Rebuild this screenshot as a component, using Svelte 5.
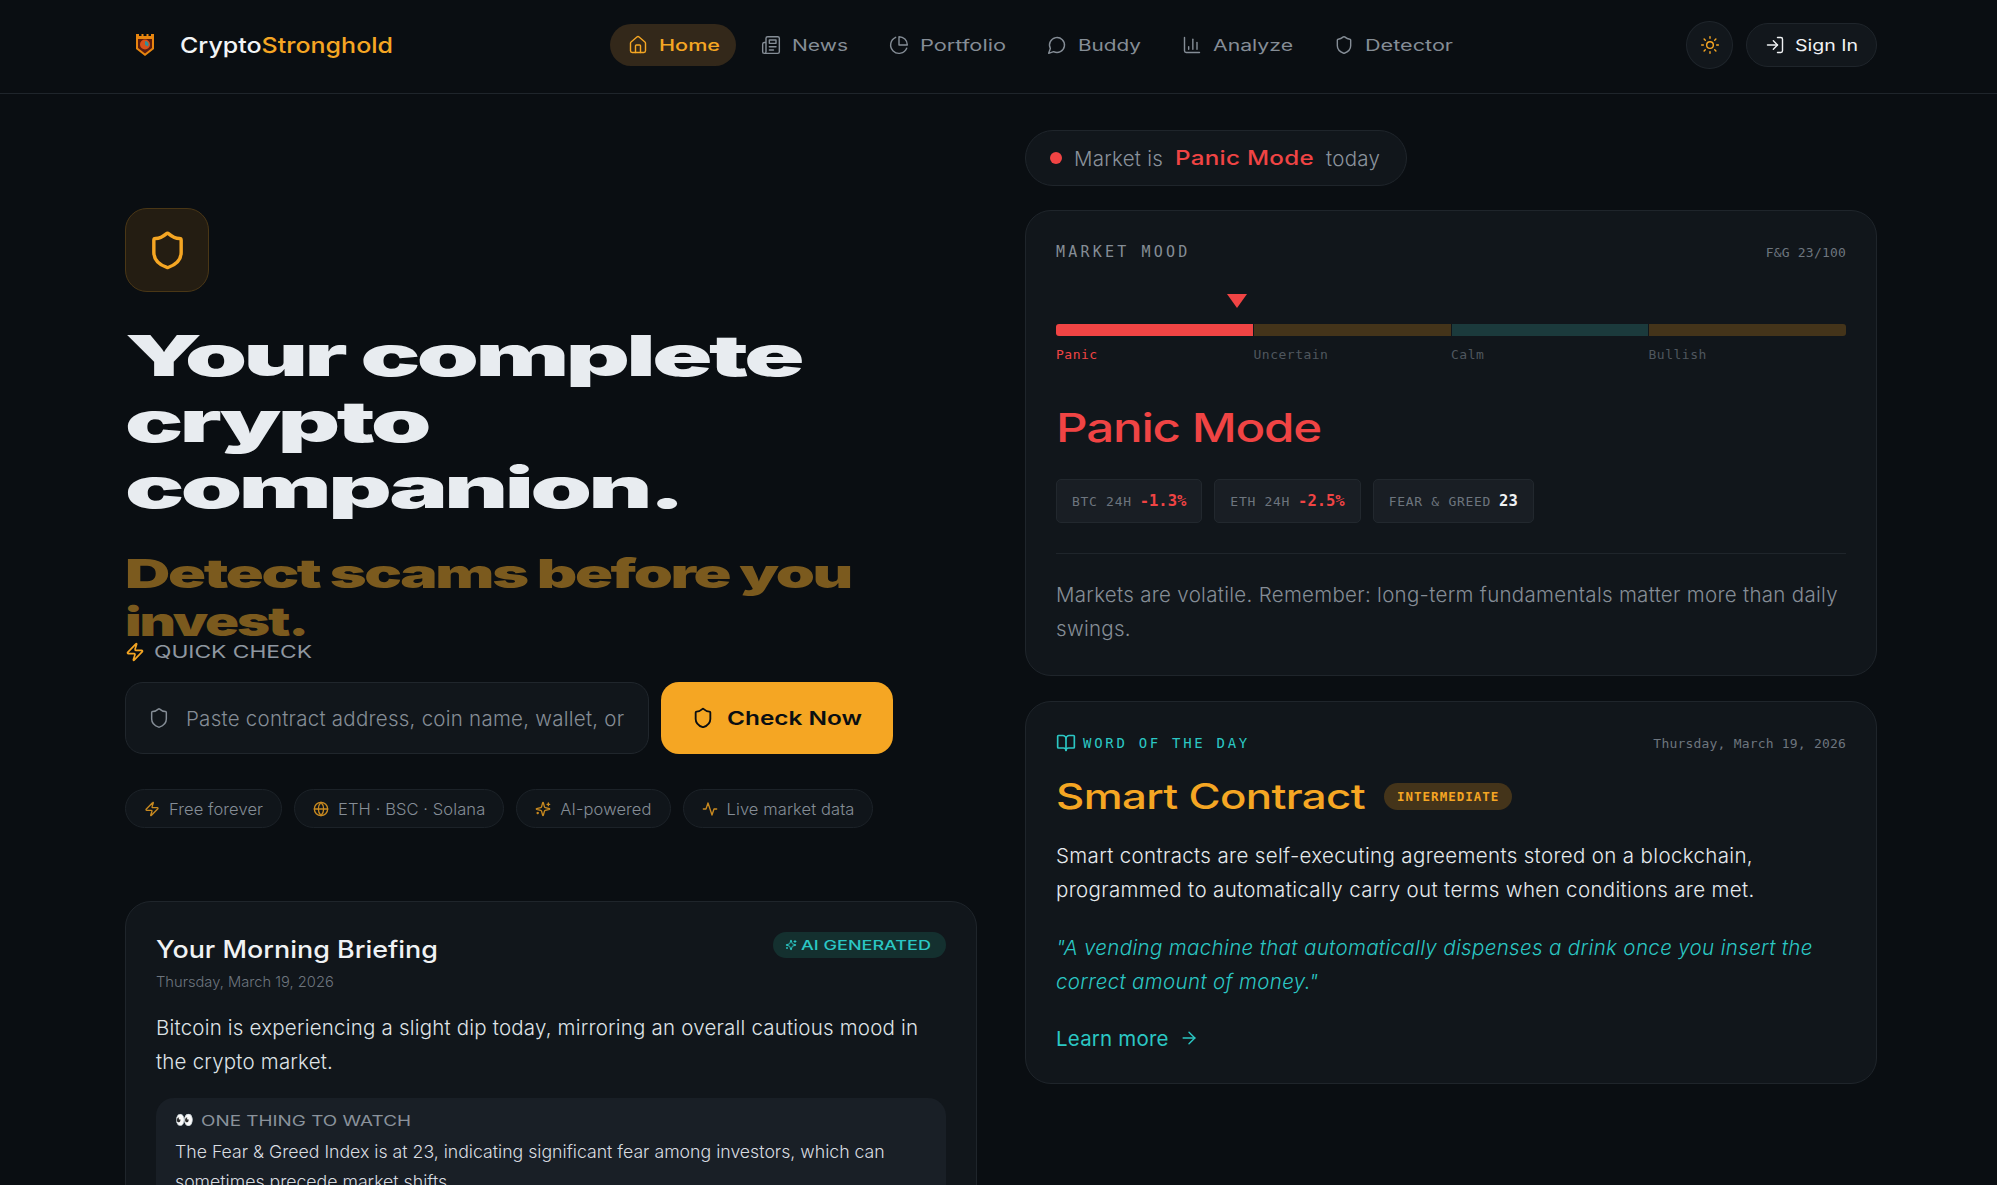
<script>
  function fit(node, width) {
    node.style.width = 'max-content';
    const natural = node.getBoundingClientRect().width;
    node.style.width = width + 'px';
    node.style.transform = `scaleX(${width / natural})`;
  }

  const icons = {
    home: ['M15 21v-8a1 1 0 0 0-1-1h-4a1 1 0 0 0-1 1v8', 'M3 10a2 2 0 0 1 .709-1.528l7-5.999a2 2 0 0 1 2.582 0l7 5.999A2 2 0 0 1 21 10v9a2 2 0 0 1-2 2H5a2 2 0 0 1-2-2z'],
    news: ['M4 22h16a2 2 0 0 0 2-2V4a2 2 0 0 0-2-2H8a2 2 0 0 0-2 2v16a2 2 0 0 1-2 2Zm0 0a2 2 0 0 1-2-2v-9c0-1.1.9-2 2-2h2', 'M18 14h-8', 'M15 18h-5', 'M10 6h8v4h-8V6Z'],
    pie: ['M21.21 15.89A10 10 0 1 1 8 2.83', 'M22 12A10 10 0 0 0 12 2v10z'],
    chat: ['M7.9 20A9 9 0 1 0 4 16.1L2 22Z'],
    chart: ['M3 3v16a2 2 0 0 0 2 2h16', 'M18 17V9', 'M13 17V5', 'M8 17v-3'],
    shield: ['M20 13c0 5-3.5 7.5-7.66 8.95a1 1 0 0 1-.67-.01C7.5 20.5 4 18 4 13V6a1 1 0 0 1 1-1c2 0 4.5-1.2 6.24-2.72a1.17 1.17 0 0 1 1.52 0C14.51 3.81 17 5 19 5a1 1 0 0 1 1 1z'],
    sun: ['M12 8a4 4 0 1 0 0 8 4 4 0 0 0 0-8z', 'M12 2v2', 'M12 20v2', 'm4.93 4.93 1.41 1.41', 'm17.66 17.66 1.41 1.41', 'M2 12h2', 'M20 12h2', 'm6.34 17.66-1.41 1.41', 'm19.07 4.93-1.41 1.41'],
    login: ['M15 3h4a2 2 0 0 1 2 2v14a2 2 0 0 1-2 2h-4', 'm10 17 5-5-5-5', 'M15 12H3'],
    zap: ['M4 14a1 1 0 0 1-.78-1.63l9.9-10.2a.5.5 0 0 1 .86.46l-1.92 6.02A1 1 0 0 0 13 10h7a1 1 0 0 1 .78 1.63l-9.9 10.2a.5.5 0 0 1-.86-.46l1.92-6.02A1 1 0 0 0 11 14z'],
    globe: ['M12 2a10 10 0 1 0 0 20 10 10 0 0 0 0-20z', 'M12 2a14.5 14.5 0 0 0 0 20 14.5 14.5 0 0 0 0-20', 'M2 12h20'],
    sparkles: ['M9.937 15.5A2 2 0 0 0 8.5 14.063l-6.135-1.582a.5.5 0 0 1 0-.962L8.5 9.936A2 2 0 0 0 9.937 8.5l1.582-6.135a.5.5 0 0 1 .963 0L14.063 8.5A2 2 0 0 0 15.5 9.937l6.135 1.581a.5.5 0 0 1 0 .964L15.5 14.063a2 2 0 0 0-1.437 1.437l-1.582 6.135a.5.5 0 0 1-.963 0z', 'M20 3v4', 'M22 5h-4', 'M4 17v2', 'M5 18H3'],
    activity: ['M22 12h-4l-3 9L9 3l-3 9H2'],
    book: ['M12 7v14', 'M3 18a1 1 0 0 1-1-1V4a1 1 0 0 1 1-1h5a4 4 0 0 1 4 4 4 4 0 0 1 4-4h5a1 1 0 0 1 1 1v13a1 1 0 0 1-1 1h-6a3 3 0 0 0-3 3 3 3 0 0 0-3-3z'],
    arrow: ['M5 12h14', 'm12 5 7 7-7 7']
  };

  const navItems = [
    { label: 'Home', icon: 'home', width: 61, active: true },
    { label: 'News', icon: 'news', width: 56 },
    { label: 'Portfolio', icon: 'pie', width: 86 },
    { label: 'Buddy', icon: 'chat', width: 63 },
    { label: 'Analyze', icon: 'chart', width: 80 },
    { label: 'Detector', icon: 'shield', width: 88 }
  ];

  const chips = [
    { label: 'Free forever', icon: 'zap' },
    { label: 'ETH · BSC · Solana', icon: 'globe' },
    { label: 'AI-powered', icon: 'sparkles' },
    { label: 'Live market data', icon: 'activity' }
  ];

  const moods = [
    { label: 'Panic', cls: 'seg_panic' },
    { label: 'Uncertain', cls: 'seg_amber' },
    { label: 'Calm', cls: 'seg_teal' },
    { label: 'Bullish', cls: 'seg_amber' }
  ];

  const stats = [
    { label: 'BTC 24H', value: '-1.3%', down: true },
    { label: 'ETH 24H', value: '-2.5%', down: true },
    { label: 'FEAR & GREED', value: '23', down: false }
  ];
</script>

{#snippet icon(name, cls)}
  <svg class="icon {cls}" viewBox="0 0 24 24" fill="none" stroke="currentColor" stroke-width="2" stroke-linecap="round" stroke-linejoin="round">
    {#each icons[name] as d}<path {d} />{/each}
  </svg>
{/snippet}

<div class="page">
  <header class="nav">
    <div class="brand">
      <svg class="logo" viewBox="0 0 20 24">
        <path d="M1 1h3v2h2.500V1h2v2h3V1h2v2H16V1h3v15l-9 7-9-7z" fill="#e8860f" />
        <path d="M3 6h14v9l-7 5.500L3 15z" fill="#5c1c0e" />
        <circle cx="10" cy="11.500" r="5" fill="#d8501a" />
        <path d="M10 8a3.500 3.500 0 0 1 3 5.500L10 12z" fill="#2f8f9a" />
      </svg>
      <span class="wide brand_name" use:fit={213}>Crypto<span class="amber">Stronghold</span></span>
    </div>
    <nav class="links">
      {#each navItems as item}
        <a class="link" class:active={item.active} href="#top">
          {@render icon(item.icon, 'i18')}
          <span class="wide_slot" style="width:{item.width}px"><span class="wide" use:fit={item.width}>{item.label}</span></span>
        </a>
      {/each}
    </nav>
    <div class="nav_right">
      <button class="theme">{@render icon('sun', 'i18')}</button>
      <button class="signin">
        {@render icon('login', 'i18')}
        <span class="wide_slot signin_slot"><span class="wide" use:fit={63}>Sign In</span></span>
      </button>
    </div>
  </header>

  <main class="grid">
    <section class="left">
      <div class="hero_icon">{@render icon('shield', 'i36')}</div>
      <h1>
        <span class="line" use:fit={676}>Your complete</span>
        <span class="line" use:fit={303}>crypto</span>
        <span class="line" use:fit={557}>companion.</span>
      </h1>
      <h2 class="tagline">
        <span class="line" use:fit={726}>Detect scams before you</span>
        <span class="line" use:fit={182}>invest.</span>
      </h2>
      <div class="quick">
        {@render icon('zap', 'i20 amber')}
        <span class="wide_slot"><span class="wide" use:fit={158}>QUICK CHECK</span></span>
      </div>
      <div class="check_row">
        <div class="check_input">
          {@render icon('shield', 'i22')}
          <span class="placeholder">Paste contract address, coin name, wallet, or</span>
        </div>
        <button class="check_btn">
          {@render icon('shield', 'i22')}
          <span class="wide_slot check_slot"><span class="wide" use:fit={135}>Check Now</span></span>
        </button>
      </div>
      <div class="chips">
        {#each chips as chip}
          <span class="chip">{@render icon(chip.icon, 'i16 amber_dim')}{chip.label}</span>
        {/each}
      </div>

      <article class="card briefing">
        <div class="brief_head">
          <div>
            <h3 class="brief_title"><span class="line" use:fit={282}>Your Morning Briefing</span></h3>
            <div class="brief_date">Thursday, March 19, 2026</div>
          </div>
          <span class="ai_badge">
            {@render icon('sparkles', 'i12')}
            <span class="wide_slot ai_slot"><span class="wide" use:fit={130}>AI GENERATED</span></span>
          </span>
        </div>
        <p class="brief_text">Bitcoin is experiencing a slight dip today, mirroring an overall cautious mood in the crypto market.</p>
        <div class="watch">
          <div class="watch_head">
            <span class="eyes">👀</span>
            <span class="wide_slot"><span class="wide" use:fit={210}>ONE THING TO WATCH</span></span>
          </div>
          <p>The Fear &amp; Greed Index is at 23, indicating significant fear among investors, which can sometimes precede market shifts.</p>
        </div>
      </article>
    </section>

    <section class="right">
      <div class="status">
        <span class="dot"></span>
        <span>Market is</span>
        <span class="wide_slot status_slot"><span class="wide" use:fit={139}>Panic Mode</span></span>
        <span>today</span>
      </div>

      <article class="card mood">
        <div class="mood_head">
          <span class="mood_label">MARKET MOOD</span>
          <span class="mood_score">F&amp;G 23/100</span>
        </div>
        <div class="pointer_track"><span class="pointer"></span></div>
        <div class="bar">
          {#each moods as m}<span class={m.cls}></span>{/each}
        </div>
        <div class="bar_labels">
          {#each moods as m, i}<span class:red={i === 0}>{m.label}</span>{/each}
        </div>
        <h2 class="mood_title"><span class="line" use:fit={265}>Panic Mode</span></h2>
        <div class="stats">
          {#each stats as s}
            <span class="stat">{s.label}<b class:red={s.down}>{s.value}</b></span>
          {/each}
        </div>
        <p class="mood_text">Markets are volatile. Remember: long-term fundamentals matter more than daily swings.</p>
      </article>

      <article class="card word">
        <div class="word_head">
          <span class="word_label">{@render icon('book', 'i20')}WORD OF THE DAY</span>
          <span class="word_date">Thursday, March 19, 2026</span>
        </div>
        <div class="word_title">
          <span class="wide_slot word_slot"><span class="wide" use:fit={309}>Smart Contract</span></span>
          <span class="level">INTERMEDIATE</span>
        </div>
        <p class="word_text">Smart contracts are self-executing agreements stored on a blockchain, programmed to automatically carry out terms when conditions are met.</p>
        <p class="word_quote">"A vending machine that automatically dispenses a drink once you insert the correct amount of money."</p>
        <a class="learn" href="#top">Learn more {@render icon('arrow', 'i18')}</a>
      </article>
    </section>
  </main>
</div>

<style>
  :global(body) {
    margin: 0;
    background: #0a0e12;
  }
  .page {
    height: 1185px;
    overflow: hidden;
    background: #0a0e12;
    color: #e6eaee;
    font-family: Inter, "Liberation Sans", sans-serif;
    font-weight: 300;
  }
  .icon { display: block; flex: none; }
  .i12 { width: 12px; height: 12px; }
  .i16 { width: 16px; height: 16px; }
  .i18 { width: 20px; height: 20px; stroke-width: 1.7; }
  .i20 { width: 20px; height: 20px; }
  .i22 { width: 22px; height: 22px; }
  .i36 { width: 41px; height: 41px; }
  .amber { color: #f5a623; }
  .amber_dim { color: #c98a20; }
  .red { color: #f04444; }

  .wide, .line {
    display: inline-block;
    white-space: nowrap;
    text-align: left;
    transform-origin: left center;
  }
  .line { display: block; }
  .wide_slot { display: block; flex: none; }

  .nav {
    height: 90px;
    border-bottom: 1px solid #1f252b;
    padding: 0 120px 3px 135px;
    display: flex;
    align-items: center;
  }
  .brand {
    display: flex;
    align-items: center;
    gap: 25px;
    width: 475px;
  }
  .logo { width: 20px; height: 24px; flex: none; }
  .brand_name {
    font-size: 22px;
    font-weight: 500;
    color: #f2f4f6;
  }
  .links {
    display: flex;
    align-items: center;
    gap: 7px;
  }
  .link {
    height: 42px;
    padding: 0 16px 0 18px;
    display: flex;
    align-items: center;
    gap: 11px;
    border-radius: 21px;
    color: #858d96;
    text-decoration: none;
    font-size: 16px;
    font-weight: 400;
  }
  .link.active {
    background: #33281a;
    color: #f5a623;
    font-weight: 500;
  }
  .nav_right {
    margin-left: auto;
    display: flex;
    align-items: center;
    gap: 13px;
  }
  .theme {
    width: 47px;
    height: 48px;
    border: 1px solid #1f252b;
    border-radius: 50%;
    background: #12171c;
    color: #f5a623;
    display: flex;
    align-items: center;
    justify-content: center;
    padding: 0;
  }
  .signin {
    width: 131px;
    height: 44px;
    border: 1px solid #1f252b;
    border-radius: 22px;
    background: #12171c;
    color: #f0f2f4;
    display: flex;
    align-items: center;
    gap: 10px;
    padding: 0 0 0 18px;
    font-family: inherit;
    font-size: 16px;
    font-weight: 400;
  }
  .signin_slot { width: 63px; }

  .grid {
    display: grid;
    grid-template-columns: 852px 852px;
    gap: 48px;
    padding: 0 120px 0 125px;
  }
  .left { padding-top: 114px; }
  .right { padding-top: 36px; }

  .hero_icon {
    width: 84px;
    height: 84px;
    box-sizing: border-box;
    border: 1px solid #4a3716;
    border-radius: 22px;
    background: #241d12;
    color: #f5a623;
    display: flex;
    align-items: center;
    justify-content: center;
  }
  h1 {
    margin: 31px 0 0;
    font-size: 56px;
    line-height: 66px;
    font-weight: 900;
    letter-spacing: -2px;
    color: #e8ecf0;
  }
  .tagline {
    margin: 29px 0 0;
    font-size: 40px;
    line-height: 48px;
    font-weight: 900;
    letter-spacing: -1.5px;
    color: #7b5a1e;
  }
  .quick {
    display: flex;
    align-items: center;
    gap: 9px;
    height: 24px;
    margin-top: -6px;
    color: #8f97a0;
    font-size: 17px;
    font-weight: 400;
  }
  .quick .wide_slot { width: 158px; }
  .check_row {
    display: flex;
    gap: 12px;
    margin-top: 18px;
  }
  .check_input {
    width: 524px;
    height: 72px;
    box-sizing: border-box;
    border: 1px solid #20262c;
    border-radius: 18px;
    background: #11161b;
    color: #858d96;
    display: flex;
    align-items: center;
    gap: 16px;
    padding-left: 22px;
    font-size: 20.5px;
    letter-spacing: .25px;
  }
  .check_input .icon { stroke-width: 1.6; }
  .placeholder { white-space: nowrap; }
  .check_btn {
    width: 232px;
    height: 72px;
    border: none;
    border-radius: 18px;
    background: #f5a623;
    color: #0a0e12;
    display: flex;
    align-items: center;
    gap: 13px;
    padding: 0 0 0 31px;
    font-family: inherit;
    font-size: 19px;
    font-weight: 600;
  }
  .check_slot { width: 135px; }
  .chips {
    display: flex;
    gap: 12px;
    margin-top: 35px;
  }
  .chip {
    height: 39px;
    box-sizing: border-box;
    border: 1px solid #1c2228;
    border-radius: 20px;
    background: #10151a;
    color: #858d96;
    display: flex;
    align-items: center;
    gap: 9px;
    padding: 0 18px;
    font-size: 16.5px;
    letter-spacing: .1px;
    white-space: nowrap;
  }

  .card {
    border: 1px solid #1f252b;
    border-radius: 26px;
    background: #11161b;
    box-sizing: border-box;
  }
  .briefing {
    margin-top: 73px;
    padding: 30px 30px 30px;
  }
  .brief_head {
    display: flex;
    justify-content: space-between;
    align-items: flex-start;
  }
  .brief_title {
    margin: 0;
    font-size: 24px;
    line-height: 36px;
    font-weight: 500;
    color: #f0f2f4;
  }
  .brief_date {
    margin-top: 4px;
    font-size: 14.7px;
    line-height: 20px;
    color: #6d757e;
  }
  .ai_badge {
    width: 173px;
    height: 26px;
    box-sizing: border-box;
    border-radius: 13px;
    background: #14302f;
    color: #2bc7c4;
    display: flex;
    align-items: center;
    gap: 4px;
    padding-left: 12px;
    font-size: 13px;
    font-weight: 500;
  }
  .ai_slot { width: 130px; }
  .brief_text {
    margin: 19px 0 0;
    font-size: 20.5px;
    letter-spacing: .2px;
    line-height: 34px;
    color: #dfe3e7;
  }
  .watch {
    margin-top: 19px;
    padding: 12px 19px 20px;
    border-radius: 18px;
    background: #191f26;
  }
  .watch_head {
    display: flex;
    align-items: center;
    gap: 7px;
    color: #8a929b;
    font-size: 14px;
    font-weight: 400;
  }
  .watch_head .wide_slot { width: 210px; }
  .eyes { font-size: 15px; line-height: 20px; }
  .watch p {
    margin: 7px 0 0;
    font-size: 17.7px;
    line-height: 30px;
    color: #d8dce0;
  }

  .status {
    width: 382px;
    height: 56px;
    box-sizing: border-box;
    border: 1px solid #1f252b;
    border-radius: 28px;
    background: #11161b;
    color: #8a929b;
    display: flex;
    align-items: center;
    padding-left: 24px;
    font-size: 20.5px;
    letter-spacing: .25px;
  }
  .dot {
    width: 12px;
    height: 12px;
    border-radius: 50%;
    background: #f04444;
    margin-right: 12px;
  }
  .status_slot {
    width: 139px;
    margin: 0 12px;
    color: #f04444;
    font-size: 20px;
    font-weight: 500;
  }

  .mood {
    margin-top: 24px;
    height: 466px;
    padding: 29px 30px 0;
  }
  .mood_head, .word_head {
    display: flex;
    justify-content: space-between;
    align-items: center;
    height: 24px;
  }
  .mood_label {
    font-family: "DejaVu Sans Mono", monospace;
    font-size: 15px;
    letter-spacing: 3.2px;
    color: #858d96;
  }
  .mood_score, .word_date {
    font-family: "DejaVu Sans Mono", monospace;
    font-size: 13px;
    letter-spacing: .2px;
    color: #6d757e;
  }
  .pointer_track {
    height: 14px;
    margin-top: 30px;
    padding-left: 171px;
  }
  .pointer {
    display: block;
    width: 0;
    height: 0;
    border-left: 10px solid transparent;
    border-right: 10px solid transparent;
    border-top: 14px solid #f04444;
  }
  .bar {
    display: grid;
    grid-template-columns: repeat(4, 1fr);
    gap: 1px;
    height: 12px;
    margin-top: 16px;
    border-radius: 3px;
    overflow: hidden;
  }
  .seg_panic { background: #f04444; }
  .seg_amber { background: #44341a; }
  .seg_teal { background: #1b3a3c; }
  .bar_labels {
    display: grid;
    grid-template-columns: repeat(4, 1fr);
    margin-top: 11px;
    height: 16px;
    font-family: "DejaVu Sans Mono", monospace;
    font-size: 13px;
    letter-spacing: .5px;
    line-height: 16px;
    color: #4f565e;
  }
  .mood_title {
    margin: 41px 0 0;
    font-size: 40px;
    line-height: 48px;
    font-weight: 500;
    letter-spacing: -1px;
    color: #f04444;
  }
  .stats {
    display: flex;
    gap: 12px;
    margin-top: 27px;
  }
  .stat {
    height: 44px;
    box-sizing: border-box;
    border: 1px solid #22282e;
    border-radius: 5px;
    background: #191e24;
    color: #6d757e;
    display: flex;
    align-items: center;
    gap: 8px;
    padding: 0 15px;
    font-family: "DejaVu Sans Mono", monospace;
    font-size: 13px;
    letter-spacing: .7px;
    white-space: nowrap;
  }
  .stat b {
    font-size: 15.5px;
    font-weight: 700;
    letter-spacing: 0;
    color: #f0f2f4;
  }
  .stat b.red { color: #f04444; }
  .mood_text {
    margin: 30px 0 0;
    padding-top: 24px;
    border-top: 1px solid #1f252b;
    font-size: 20.5px;
    letter-spacing: .3px;
    line-height: 34px;
    color: #858d96;
  }

  .word {
    margin-top: 25px;
    height: 383px;
    padding: 29px 30px 0;
  }
  .word_label {
    display: flex;
    align-items: center;
    gap: 7px;
    color: #2bc7c4;
    font-family: "DejaVu Sans Mono", monospace;
    font-size: 14px;
    letter-spacing: 2.7px;
  }
  .word_title {
    display: flex;
    align-items: center;
    gap: 19px;
    margin-top: 18px;
    height: 46px;
    color: #f5a623;
    font-size: 35px;
    font-weight: 500;
    letter-spacing: -.5px;
  }
  .word_slot { width: 309px; }
  .level {
    height: 27px;
    padding: 0 13px;
    border-radius: 14px;
    background: #44341a;
    color: #f5a623;
    font-family: "DejaVu Sans Mono", monospace;
    font-size: 12.5px;
    font-weight: 700;
    letter-spacing: 1px;
    line-height: 27px;
  }
  .word_text {
    margin: 20px 0 0;
    font-size: 20.5px;
    letter-spacing: .35px;
    line-height: 34px;
    color: #e6eaee;
  }
  .word_quote {
    margin: 24px 0 0;
    font-size: 20.5px;
    letter-spacing: .35px;
    line-height: 34px;
    font-style: italic;
    color: #2bc7c4;
  }
  .learn {
    display: flex;
    align-items: center;
    gap: 10px;
    margin-top: 22px;
    height: 34px;
    color: #2bc7c4;
    font-size: 20.5px;
    letter-spacing: .2px;
    font-weight: 400;
    text-decoration: none;
  }
</style>
